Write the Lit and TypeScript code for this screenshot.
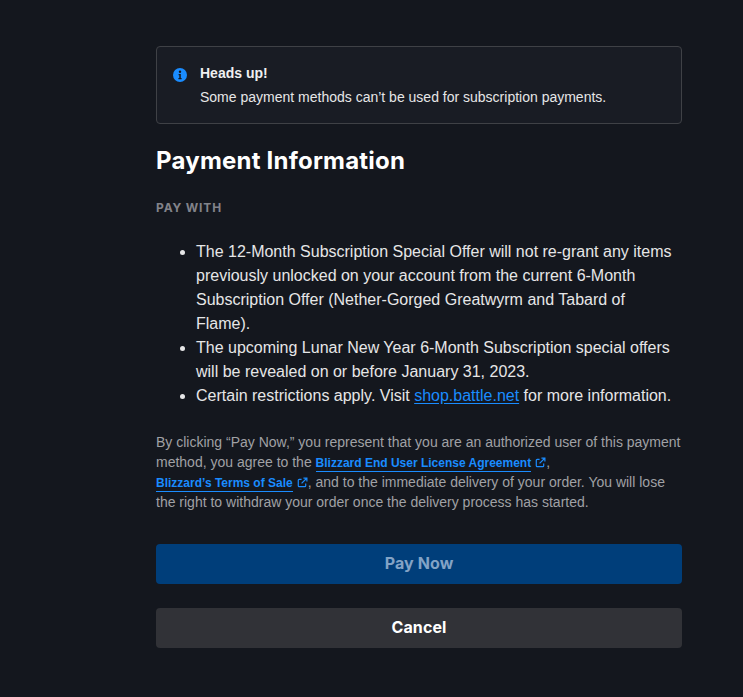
import { LitElement, html, css, svg } from "lit";
import { customElement } from "lit/decorators.js";

const ext = svg`<svg class="ext" viewBox="0 0 12 12" width="11" height="11" fill="none" stroke="currentColor" stroke-width="1.3"><path d="M9.5 7v2.6a1 1 0 0 1-1 1H2.4a1 1 0 0 1-1-1V3.5a1 1 0 0 1 1-1H5"/><path d="M7 1.2h3.8V5M10.6 1.4 5 7"/></svg>`;

@customElement("app-root")
export class AppRoot extends LitElement {
  static styles = css`
    :host {
      display: block;
      height: 697px;
      overflow: hidden;
      background: #14171e;
      font-family: "Liberation Sans", Arial, sans-serif;
      color: #e6e6e7;
    }
    .col {
      width: 526px;
      margin-left: 156px;
      padding-top: 46px;
      display: flex;
      flex-direction: column;
    }
    .alert {
      box-sizing: border-box;
      height: 78px;
      border: 1px solid #3f4146;
      border-radius: 4px;
      background: #191c24;
      display: flex;
      padding: 16px 16px 0;
      gap: 13px;
    }
    .alert svg { width: 14px; height: 14px; margin-top: 5px; flex: none; }
    .alert b { display: block; font-size: 14px; line-height: 20px; color: #f0f0f1; }
    .alert span { display: block; font-size: 14px; line-height: 20px; margin-top: 4px; color: #e6e6e7; }
    h1 {
      margin: 22px 0 0;
      font-family: Inter, sans-serif;
      font-size: 24px;
      line-height: 30px;
      font-weight: 700;
      letter-spacing: 0.22px;
      color: #fff;
    }
    .label {
      margin-top: 24px;
      font-family: Inter, sans-serif;
      font-size: 12px;
      line-height: 16px;
      font-weight: 700;
      letter-spacing: 0.85px;
      color: #82838a;
    }
    ul {
      margin: 24px 0 0;
      padding: 0 0 0 40px;
      font-size: 16px;
      line-height: 24px;
      color: #e6e6e7;
    }
    ul a { color: #1a8cff; text-decoration: underline; text-underline-offset: 2px; }
    .legal {
      margin: 24px 0 0;
      font-size: 14px;
      line-height: 20.1px;
      color: #a0a1a5;
    }
    .legal a {
      color: #1a8cff;
      font-size: 12px;
      line-height: 1;
      font-weight: 700;
      text-decoration: none;
      border-bottom: 1px solid #1a8cff;
      padding-bottom: 1px;
    }
    .ext { vertical-align: -1px; color: #1a8cff; margin-left: 4px; }
    .btn {
      box-sizing: border-box;
      height: 40px;
      padding-bottom: 2px;
      border-radius: 4px;
      display: flex;
      align-items: center;
      justify-content: center;
      font-family: Inter, sans-serif;
      font-size: 16px;
      font-weight: 700;
      letter-spacing: 0.1px;
    }
    .pay { margin-top: 32px; background: #003e7a; color: #83a3c6; }
    .cancel { margin-top: 24px; background: #313237; color: #fff; }
  `;

  render() {
    return html`<div class="col">
      <div class="alert">
        <svg viewBox="0 0 14 14"><circle cx="7" cy="7" r="7" fill="#1a8cff"/><circle cx="7" cy="3.8" r="1.2" fill="#14171e"/><path d="M5.6 6h2.2v4h.8v1.2H5.4V10h.9V7.2h-.7z" fill="#14171e"/></svg>
        <div><b>Heads up!</b><span>Some payment methods can’t be used for subscription payments.</span></div>
      </div>
      <h1>Payment Information</h1>
      <div class="label">PAY WITH</div>
      <ul>
        <li>The 12-Month Subscription Special Offer will not re-grant any items previously unlocked on your account from the current 6-Month Subscription Offer (Nether-Gorged Greatwyrm and Tabard of Flame).</li>
        <li>The upcoming Lunar New Year 6-Month Subscription special offers will be revealed on or before January 31, 2023.</li>
        <li>Certain restrictions apply. Visit <a href="#">shop.battle.net</a> for more information.</li>
      </ul>
      <p class="legal">By clicking “Pay Now,” you represent that you are an authorized user of this payment method, you agree to the <a href="#">Blizzard End User License Agreement</a>${ext},<br><a href="#">Blizzard’s Terms of Sale</a>${ext}, and to the immediate delivery of your order. You will lose the right to withdraw your order once the delivery process has started.</p>
      <div class="btn pay">Pay Now</div>
      <div class="btn cancel">Cancel</div>
    </div>`;
  }
}
